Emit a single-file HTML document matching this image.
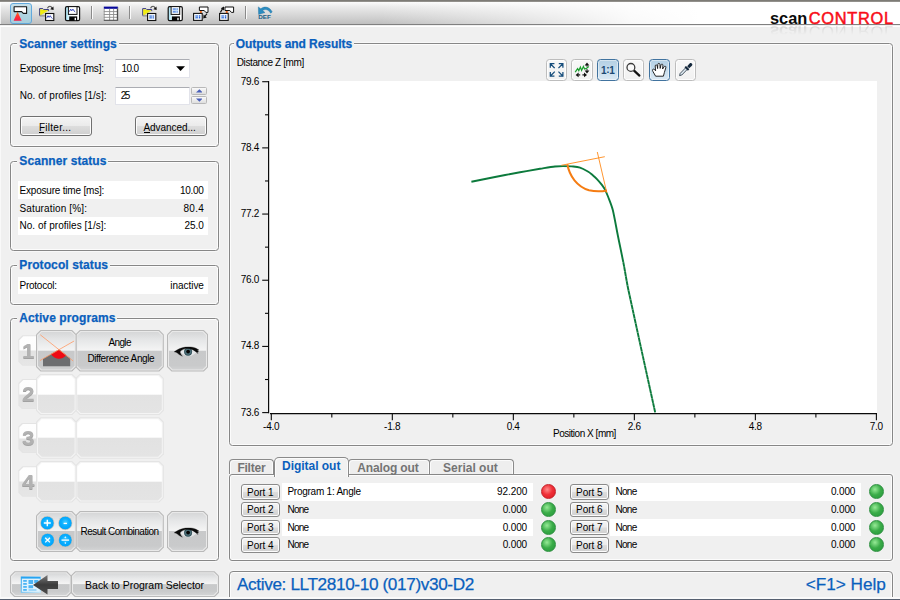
<!DOCTYPE html>
<html><head><meta charset="utf-8"><title>scanCONTROL</title>
<style>
html,body{margin:0;padding:0}
body{width:900px;height:600px;overflow:hidden;background:#f0f0f0;position:relative;font-family:"Liberation Sans",sans-serif;}
div,span,svg{position:absolute;box-sizing:border-box}
.t{white-space:pre;display:block}
.gb{border:1px solid #878787;border-radius:3.5px;box-shadow:inset 0 0 0 1px #fcfcfc,0 0 0 1px #f8f8f8}
.gt{background:#f0f0f0;height:14px}
.row{background:#fff}
.btn{border:1px solid #707070;border-radius:3px;background:linear-gradient(#f4f4f4 0%,#ebebeb 48%,#dddddd 52%,#cfcfcf 100%);box-shadow:inset 0 0 0 1px #fcfcfc}
.inp{background:#fff;border:1px solid #e2e3ea;border-top-color:#abadb3;border-radius:1px}
</style></head><body><div id="app" style="left:0;top:0;width:900px;height:600px;overflow:hidden;background:#f0f0f0">
<div style="left:0;top:0;width:900px;height:24px;background:linear-gradient(#fcfcfc 2px,#ededed 6px,#dedede 12px,#cdcdcd 19px,#bfbfbf 24px)"></div>
<div style="left:380px;top:2px;width:520px;height:21.6px;background:linear-gradient(90deg,rgba(255,255,255,0) 0,rgba(255,255,255,.5) 140px,rgba(255,255,255,.9) 250px,#fff 320px)"></div>
<div style="left:0;top:23.6px;width:900px;height:1.9px;background:#808080"></div>
<div style="left:0;top:0;width:900px;height:2px;background:linear-gradient(#7d7b76 0,#7d7b76 1.2px,#b5b3af 2px)"></div>
<div style="left:0;top:25.5px;width:900px;height:1.7px;background:#fff"></div>
<div style="left:10px;top:3px;width:22px;height:21px;border:1px solid #62a9dc;border-radius:3px;background:linear-gradient(#c6e0ea,#b1d4e0 55%,#a6cedc)"></div><div style="left:91px;top:6px;width:1px;height:13px;background:#8a8a8a"></div><div style="left:92px;top:6px;width:1px;height:13px;background:#fafafa"></div><div style="left:129px;top:6px;width:1px;height:13px;background:#8a8a8a"></div><div style="left:130px;top:6px;width:1px;height:13px;background:#fafafa"></div><div style="left:245px;top:6px;width:1px;height:13px;background:#8a8a8a"></div><div style="left:246px;top:6px;width:1px;height:13px;background:#fafafa"></div><div class="gb" style="left:10px;top:43px;width:209px;height:104px"></div><div class="gt" style="left:17.3px;top:37px;width:101.4px"></div><span class="t" style="left:19.30px;top:38.00px;font-size:12px;line-height:12px;color:#0a5fbd;font-weight:bold;letter-spacing:0.046px;-webkit-text-stroke:0.25px #0a5fbd;">Scanner settings</span><div class="gb" style="left:10px;top:161px;width:209px;height:90px"></div><div class="gt" style="left:17.3px;top:155px;width:91.1px"></div><span class="t" style="left:19.30px;top:155.00px;font-size:12px;line-height:12px;color:#0a5fbd;font-weight:bold;letter-spacing:0.081px;-webkit-text-stroke:0.25px #0a5fbd;">Scanner status</span><div class="gb" style="left:10px;top:265px;width:209px;height:39.5px"></div><div class="gt" style="left:17.3px;top:259px;width:92.7px"></div><span class="t" style="left:19.30px;top:259.00px;font-size:12px;line-height:12px;color:#0a5fbd;font-weight:bold;letter-spacing:0.096px;-webkit-text-stroke:0.25px #0a5fbd;">Protocol status</span><div class="gb" style="left:10px;top:317.5px;width:209px;height:243.5px"></div><div class="gt" style="left:17.3px;top:311.5px;width:100.1px"></div><span class="t" style="left:19.30px;top:312.00px;font-size:12px;line-height:12px;color:#0a5fbd;font-weight:bold;letter-spacing:0.100px;-webkit-text-stroke:0.25px #0a5fbd;">Active programs</span><div class="gb" style="left:229px;top:43px;width:664px;height:403px"></div><div class="gt" style="left:233.7px;top:37px;width:120.5px"></div><span class="t" style="left:235.70px;top:38.00px;font-size:12px;line-height:12px;color:#0a5fbd;font-weight:bold;letter-spacing:-0.047px;-webkit-text-stroke:0.25px #0a5fbd;">Outputs and Results</span><span class="t" style="left:19.70px;top:64.00px;font-size:10px;line-height:10px;color:#000;letter-spacing:-0.226px;">Exposure time [ms]:</span><span class="t" style="left:19.70px;top:91.00px;font-size:10px;line-height:10px;color:#000;letter-spacing:0.031px;">No. of profiles [1/s]:</span><div class="inp" style="left:115px;top:59px;width:75px;height:19px"></div><span class="t" style="left:121.60px;top:64.00px;font-size:10px;line-height:10px;color:#000;letter-spacing:-0.690px;">10.0</span><svg style="left:175.8px;top:66px" width="9.2" height="5.2"><path d="M0.1 0.2H9.1L4.6 5Z" fill="#000"/></svg><div class="inp" style="left:115px;top:87px;width:75px;height:18px"></div><span class="t" style="left:120.70px;top:91.00px;font-size:10px;line-height:10px;color:#000;letter-spacing:-1.525px;">25</span><div style="left:191px;top:87px;width:16px;height:8px;border:1px solid #b8b8b8;border-radius:1.5px;background:linear-gradient(#fafafa,#dedede)"></div><div style="left:191px;top:95.8px;width:16px;height:8.2px;border:1px solid #b8b8b8;border-radius:1.5px;background:linear-gradient(#fafafa,#dedede)"></div><svg style="left:195.6px;top:88.8px" width="6.8" height="4"><path d="M0 3.6L3.4 0.2L6.8 3.6Z" fill="#4a60b8"/></svg><svg style="left:195.6px;top:97.8px" width="6.8" height="4"><path d="M0 0.4L3.4 3.8L6.8 0.4Z" fill="#4a60b8"/></svg><div class="btn" style="left:20px;top:116px;width:72px;height:20px"></div><span class="t" style="left:39.00px;top:123.00px;font-size:10px;line-height:10px;color:#000;letter-spacing:0.248px;">Filter...</span><div style="left:39px;top:132px;width:5px;height:1px;background:#000"></div><div class="btn" style="left:135px;top:116px;width:72px;height:20px"></div><span class="t" style="left:143.50px;top:123.00px;font-size:10px;line-height:10px;color:#000;letter-spacing:-0.061px;">Advanced...</span><div style="left:143.5px;top:132px;width:6.5px;height:1px;background:#000"></div><div class="row" style="left:18px;top:181px;width:189.5px;height:17.7px"></div><div class="row" style="left:18px;top:216.6px;width:189.5px;height:18px"></div><span class="t" style="left:19.50px;top:186.00px;font-size:10px;line-height:10px;color:#000;letter-spacing:-0.198px;">Exposure time [ms]:</span><span class="t" style="left:180.00px;top:186.00px;font-size:10px;line-height:10px;color:#000;letter-spacing:-0.283px;">10.00</span><span class="t" style="left:19.50px;top:204.00px;font-size:10px;line-height:10px;color:#000;letter-spacing:0.136px;">Saturation [%]:</span><span class="t" style="left:183.50px;top:204.00px;font-size:10px;line-height:10px;color:#000;letter-spacing:0.310px;">80.4</span><span class="t" style="left:19.50px;top:221.00px;font-size:10px;line-height:10px;color:#000;letter-spacing:0.035px;">No. of profiles [1/s]:</span><span class="t" style="left:184.40px;top:221.00px;font-size:10px;line-height:10px;color:#000;letter-spacing:0.010px;">25.0</span><div class="row" style="left:18px;top:276.8px;width:189.5px;height:17.7px"></div><span class="t" style="left:19.50px;top:281.00px;font-size:10px;line-height:10px;color:#000;letter-spacing:-0.246px;">Protocol:</span><span class="t" style="left:170.30px;top:281.00px;font-size:10px;line-height:10px;color:#000;letter-spacing:-0.044px;">inactive</span><div style="left:18.3px;top:335.3px;width:20px;height:30.4px;background:#e4e4e4;clip-path:polygon(4px 0,100% 0,100% 100%,4px 100%,0 calc(100% - 4px),0 4px)"></div><div style="left:19.3px;top:336.3px;width:19px;height:28.4px;background:linear-gradient(#fefefe 0,#fdfdfd 14.2px,#e2e2e2 14.8px,#e6e6e6 100%);clip-path:polygon(4px 0,100% 0,100% 100%,4px 100%,0 calc(100% - 4px),0 4px)"></div><span class="t" style="left:21.80px;top:341.00px;font-size:20px;line-height:20px;color:#b2b2b2;font-weight:bold;text-shadow:0 1px 0 #a2a2a2;transform:scaleX(1.12);transform-origin:0 0;">1</span><div style="left:75.3px;top:330px;width:88.5px;height:41.5px;background:#b9b9b9;clip-path:polygon(4.5px 0,84px 0,100% 4.5px,100% 37px,84px 100%,4.5px 100%,0 37px,0 4.5px)"></div><div style="left:76.3px;top:331px;width:86.5px;height:39.5px;background:#e9e9e9;clip-path:polygon(4.1px 0,82.4px 0,100% 4.1px,100% 35.4px,82.4px 100%,4.1px 100%,0 35.4px,0 4.1px)"></div><div style="left:77.3px;top:332px;width:84.5px;height:37.5px;background:linear-gradient(#d6d7d8 0px,#e6e7e8 8.415px,#f4f4f4 18.2px,#c8c9ca 19.2px,#c9cacb 33.5px,#d2d3d4 100%);clip-path:polygon(3.7px 0,80.8px 0,100% 3.7px,100% 33.8px,80.8px 100%,3.7px 100%,0 33.8px,0 3.7px)"></div><div style="left:36px;top:330px;width:40.6px;height:41.5px;background:#b9b9b9;clip-path:polygon(4.5px 0,36.1px 0,100% 4.5px,100% 37px,36.1px 100%,4.5px 100%,0 37px,0 4.5px)"></div><div style="left:37px;top:331px;width:38.6px;height:39.5px;background:#e9e9e9;clip-path:polygon(4.1px 0,34.5px 0,100% 4.1px,100% 35.4px,34.5px 100%,4.1px 100%,0 35.4px,0 4.1px)"></div><div style="left:38px;top:332px;width:36.6px;height:37.5px;background:linear-gradient(#d6d7d8 0px,#e6e7e8 8.415px,#f4f4f4 18.2px,#c8c9ca 19.2px,#c9cacb 33.5px,#d2d3d4 100%);clip-path:polygon(3.7px 0,32.9px 0,100% 3.7px,100% 33.8px,32.9px 100%,3.7px 100%,0 33.8px,0 3.7px)"></div><div style="left:18.3px;top:379px;width:20px;height:30.4px;background:#e4e4e4;clip-path:polygon(4px 0,100% 0,100% 100%,4px 100%,0 calc(100% - 4px),0 4px)"></div><div style="left:19.3px;top:380px;width:19px;height:28.4px;background:linear-gradient(#fefefe 0,#fdfdfd 14.2px,#e2e2e2 14.8px,#e6e6e6 100%);clip-path:polygon(4px 0,100% 0,100% 100%,4px 100%,0 calc(100% - 4px),0 4px)"></div><span class="t" style="left:21.80px;top:384.00px;font-size:20px;line-height:20px;color:#b2b2b2;font-weight:bold;text-shadow:0 1px 0 #a2a2a2;transform:scaleX(1.12);transform-origin:0 0;">2</span><div style="left:75.3px;top:373.7px;width:88.5px;height:41.5px;background:#e4e4e4;clip-path:polygon(4.5px 0,84px 0,100% 4.5px,100% 37px,84px 100%,4.5px 100%,0 37px,0 4.5px)"></div><div style="left:76.3px;top:374.7px;width:86.5px;height:39.5px;background:#f4f4f4;clip-path:polygon(4.1px 0,82.4px 0,100% 4.1px,100% 35.4px,82.4px 100%,4.1px 100%,0 35.4px,0 4.1px)"></div><div style="left:77.3px;top:375.7px;width:84.5px;height:37.5px;background:linear-gradient(#ffffff 0px,#ffffff 18.2px,#e2e2e2 19.2px,#e4e4e4 100%);clip-path:polygon(3.7px 0,80.8px 0,100% 3.7px,100% 33.8px,80.8px 100%,3.7px 100%,0 33.8px,0 3.7px)"></div><div style="left:36px;top:373.7px;width:40.6px;height:41.5px;background:#e4e4e4;clip-path:polygon(4.5px 0,36.1px 0,100% 4.5px,100% 37px,36.1px 100%,4.5px 100%,0 37px,0 4.5px)"></div><div style="left:37px;top:374.7px;width:38.6px;height:39.5px;background:#f4f4f4;clip-path:polygon(4.1px 0,34.5px 0,100% 4.1px,100% 35.4px,34.5px 100%,4.1px 100%,0 35.4px,0 4.1px)"></div><div style="left:38px;top:375.7px;width:36.6px;height:37.5px;background:linear-gradient(#ffffff 0px,#ffffff 18.2px,#e2e2e2 19.2px,#e4e4e4 100%);clip-path:polygon(3.7px 0,32.9px 0,100% 3.7px,100% 33.8px,32.9px 100%,3.7px 100%,0 33.8px,0 3.7px)"></div><div style="left:18.3px;top:422.6px;width:20px;height:30.4px;background:#e4e4e4;clip-path:polygon(4px 0,100% 0,100% 100%,4px 100%,0 calc(100% - 4px),0 4px)"></div><div style="left:19.3px;top:423.6px;width:19px;height:28.4px;background:linear-gradient(#fefefe 0,#fdfdfd 14.2px,#e2e2e2 14.8px,#e6e6e6 100%);clip-path:polygon(4px 0,100% 0,100% 100%,4px 100%,0 calc(100% - 4px),0 4px)"></div><span class="t" style="left:21.80px;top:428.00px;font-size:20px;line-height:20px;color:#b2b2b2;font-weight:bold;text-shadow:0 1px 0 #a2a2a2;transform:scaleX(1.12);transform-origin:0 0;">3</span><div style="left:75.3px;top:417.3px;width:88.5px;height:41.5px;background:#e4e4e4;clip-path:polygon(4.5px 0,84px 0,100% 4.5px,100% 37px,84px 100%,4.5px 100%,0 37px,0 4.5px)"></div><div style="left:76.3px;top:418.3px;width:86.5px;height:39.5px;background:#f4f4f4;clip-path:polygon(4.1px 0,82.4px 0,100% 4.1px,100% 35.4px,82.4px 100%,4.1px 100%,0 35.4px,0 4.1px)"></div><div style="left:77.3px;top:419.3px;width:84.5px;height:37.5px;background:linear-gradient(#ffffff 0px,#ffffff 18.2px,#e2e2e2 19.2px,#e4e4e4 100%);clip-path:polygon(3.7px 0,80.8px 0,100% 3.7px,100% 33.8px,80.8px 100%,3.7px 100%,0 33.8px,0 3.7px)"></div><div style="left:36px;top:417.3px;width:40.6px;height:41.5px;background:#e4e4e4;clip-path:polygon(4.5px 0,36.1px 0,100% 4.5px,100% 37px,36.1px 100%,4.5px 100%,0 37px,0 4.5px)"></div><div style="left:37px;top:418.3px;width:38.6px;height:39.5px;background:#f4f4f4;clip-path:polygon(4.1px 0,34.5px 0,100% 4.1px,100% 35.4px,34.5px 100%,4.1px 100%,0 35.4px,0 4.1px)"></div><div style="left:38px;top:419.3px;width:36.6px;height:37.5px;background:linear-gradient(#ffffff 0px,#ffffff 18.2px,#e2e2e2 19.2px,#e4e4e4 100%);clip-path:polygon(3.7px 0,32.9px 0,100% 3.7px,100% 33.8px,32.9px 100%,3.7px 100%,0 33.8px,0 3.7px)"></div><div style="left:18.3px;top:466.3px;width:20px;height:30.4px;background:#e4e4e4;clip-path:polygon(4px 0,100% 0,100% 100%,4px 100%,0 calc(100% - 4px),0 4px)"></div><div style="left:19.3px;top:467.3px;width:19px;height:28.4px;background:linear-gradient(#fefefe 0,#fdfdfd 14.2px,#e2e2e2 14.8px,#e6e6e6 100%);clip-path:polygon(4px 0,100% 0,100% 100%,4px 100%,0 calc(100% - 4px),0 4px)"></div><span class="t" style="left:21.80px;top:472.00px;font-size:20px;line-height:20px;color:#b2b2b2;font-weight:bold;text-shadow:0 1px 0 #a2a2a2;transform:scaleX(1.12);transform-origin:0 0;">4</span><div style="left:75.3px;top:461px;width:88.5px;height:41.5px;background:#e4e4e4;clip-path:polygon(4.5px 0,84px 0,100% 4.5px,100% 37px,84px 100%,4.5px 100%,0 37px,0 4.5px)"></div><div style="left:76.3px;top:462px;width:86.5px;height:39.5px;background:#f4f4f4;clip-path:polygon(4.1px 0,82.4px 0,100% 4.1px,100% 35.4px,82.4px 100%,4.1px 100%,0 35.4px,0 4.1px)"></div><div style="left:77.3px;top:463px;width:84.5px;height:37.5px;background:linear-gradient(#ffffff 0px,#ffffff 18.2px,#e2e2e2 19.2px,#e4e4e4 100%);clip-path:polygon(3.7px 0,80.8px 0,100% 3.7px,100% 33.8px,80.8px 100%,3.7px 100%,0 33.8px,0 3.7px)"></div><div style="left:36px;top:461px;width:40.6px;height:41.5px;background:#e4e4e4;clip-path:polygon(4.5px 0,36.1px 0,100% 4.5px,100% 37px,36.1px 100%,4.5px 100%,0 37px,0 4.5px)"></div><div style="left:37px;top:462px;width:38.6px;height:39.5px;background:#f4f4f4;clip-path:polygon(4.1px 0,34.5px 0,100% 4.1px,100% 35.4px,34.5px 100%,4.1px 100%,0 35.4px,0 4.1px)"></div><div style="left:38px;top:463px;width:36.6px;height:37.5px;background:linear-gradient(#ffffff 0px,#ffffff 18.2px,#e2e2e2 19.2px,#e4e4e4 100%);clip-path:polygon(3.7px 0,32.9px 0,100% 3.7px,100% 33.8px,32.9px 100%,3.7px 100%,0 33.8px,0 3.7px)"></div><div style="left:167px;top:330px;width:41.3px;height:41.5px;background:#b9b9b9;clip-path:polygon(4.5px 0,36.8px 0,100% 4.5px,100% 37px,36.8px 100%,4.5px 100%,0 37px,0 4.5px)"></div><div style="left:168px;top:331px;width:39.3px;height:39.5px;background:#e9e9e9;clip-path:polygon(4.1px 0,35.2px 0,100% 4.1px,100% 35.4px,35.2px 100%,4.1px 100%,0 35.4px,0 4.1px)"></div><div style="left:169px;top:332px;width:37.3px;height:37.5px;background:linear-gradient(#d6d7d8 0px,#e6e7e8 8.415px,#f4f4f4 18.2px,#c8c9ca 19.2px,#c9cacb 33.5px,#d2d3d4 100%);clip-path:polygon(3.7px 0,33.6px 0,100% 3.7px,100% 33.8px,33.6px 100%,3.7px 100%,0 33.8px,0 3.7px)"></div><svg style="left:36px;top:330px" width="42" height="42" viewBox="36 330 42 42">
<polygon points="43,366.3 43,358.7 59,349.5 70.2,358.3 70.2,366.3" fill="#6d6e70"/>
<path d="M59 349.5L51 354.1A9.2 9.2 0 0 0 66.2 355.2Z" fill="#ee0a14"/>
<line x1="40.3" y1="334.8" x2="73.2" y2="361" stroke="#ff9a66" stroke-width="0.8"/>
<line x1="74.1" y1="341" x2="39.9" y2="360.6" stroke="#ff9a66" stroke-width="0.8"/>
</svg><span class="t" style="left:108.50px;top:338.00px;font-size:10px;line-height:10px;color:#000;letter-spacing:-0.645px;">Angle</span><span class="t" style="left:87.40px;top:354.00px;font-size:10px;line-height:10px;color:#000;letter-spacing:-0.400px;">Difference Angle</span><svg style="left:170px;top:342px" width="34" height="20" viewBox="170 342 34 20">
<path d="M180 352C182 349.4 186 348.3 189 348.3C192 348.5 195 350 196.8 352C195 354.4 192 355.9 189 355.9C186 355.9 182.5 355 180 352Z" fill="#e4e6e8"/>
<circle cx="188.1" cy="351.7" r="3.9" fill="#4f737d"/>
<circle cx="188.1" cy="351.7" r="3.6" fill="none" stroke="#2f4a52" stroke-width="0.8"/>
<circle cx="188.1" cy="351.6" r="1.9" fill="#050505"/>
<path d="M174.2 351.8C177 349.8 181 347.6 185.2 347.1C189 346.6 193.5 347 196 348.2L198.9 350L197.4 350.6L198.6 352L197 352L198 353.6C196 351.6 194 350.2 192 349.4C189 348.2 185 348.3 182 350C180.6 350.8 180 351.6 180 352C180.4 353.6 181.2 355 182.4 356.2C180 355.4 178 353.6 176.6 352.6C175.8 352.2 175 352 174.2 351.8Z" fill="#0a0a0a" stroke="#0a0a0a" stroke-width="0.3"/>
</svg><div style="left:75.3px;top:511px;width:88.5px;height:41px;background:#b9b9b9;clip-path:polygon(4.5px 0,84px 0,100% 4.5px,100% 36.5px,84px 100%,4.5px 100%,0 36.5px,0 4.5px)"></div><div style="left:76.3px;top:512px;width:86.5px;height:39px;background:#e9e9e9;clip-path:polygon(4.1px 0,82.4px 0,100% 4.1px,100% 34.9px,82.4px 100%,4.1px 100%,0 34.9px,0 4.1px)"></div><div style="left:77.3px;top:513px;width:84.5px;height:37px;background:linear-gradient(#d6d7d8 0px,#e6e7e8 8.1px,#f4f4f4 17.5px,#c8c9ca 18.5px,#c9cacb 33px,#d2d3d4 100%);clip-path:polygon(3.7px 0,80.8px 0,100% 3.7px,100% 33.3px,80.8px 100%,3.7px 100%,0 33.3px,0 3.7px)"></div><div style="left:36px;top:511px;width:40.6px;height:41px;background:#b9b9b9;clip-path:polygon(4.5px 0,36.1px 0,100% 4.5px,100% 36.5px,36.1px 100%,4.5px 100%,0 36.5px,0 4.5px)"></div><div style="left:37px;top:512px;width:38.6px;height:39px;background:#e9e9e9;clip-path:polygon(4.1px 0,34.5px 0,100% 4.1px,100% 34.9px,34.5px 100%,4.1px 100%,0 34.9px,0 4.1px)"></div><div style="left:38px;top:513px;width:36.6px;height:37px;background:linear-gradient(#d6d7d8 0px,#e6e7e8 8.1px,#f4f4f4 17.5px,#c8c9ca 18.5px,#c9cacb 33px,#d2d3d4 100%);clip-path:polygon(3.7px 0,32.9px 0,100% 3.7px,100% 33.3px,32.9px 100%,3.7px 100%,0 33.3px,0 3.7px)"></div><div style="left:167px;top:511px;width:41.3px;height:41px;background:#b9b9b9;clip-path:polygon(4.5px 0,36.8px 0,100% 4.5px,100% 36.5px,36.8px 100%,4.5px 100%,0 36.5px,0 4.5px)"></div><div style="left:168px;top:512px;width:39.3px;height:39px;background:#e9e9e9;clip-path:polygon(4.1px 0,35.2px 0,100% 4.1px,100% 34.9px,35.2px 100%,4.1px 100%,0 34.9px,0 4.1px)"></div><div style="left:169px;top:513px;width:37.3px;height:37px;background:linear-gradient(#d6d7d8 0px,#e6e7e8 8.1px,#f4f4f4 17.5px,#c8c9ca 18.5px,#c9cacb 33px,#d2d3d4 100%);clip-path:polygon(3.7px 0,33.6px 0,100% 3.7px,100% 33.3px,33.6px 100%,3.7px 100%,0 33.3px,0 3.7px)"></div><svg style="left:170px;top:522.5px" width="34" height="20" viewBox="170 342 34 20">
<path d="M180 352C182 349.4 186 348.3 189 348.3C192 348.5 195 350 196.8 352C195 354.4 192 355.9 189 355.9C186 355.9 182.5 355 180 352Z" fill="#e4e6e8"/>
<circle cx="188.1" cy="351.7" r="3.9" fill="#4f737d"/>
<circle cx="188.1" cy="351.7" r="3.6" fill="none" stroke="#2f4a52" stroke-width="0.8"/>
<circle cx="188.1" cy="351.6" r="1.9" fill="#050505"/>
<path d="M174.2 351.8C177 349.8 181 347.6 185.2 347.1C189 346.6 193.5 347 196 348.2L198.9 350L197.4 350.6L198.6 352L197 352L198 353.6C196 351.6 194 350.2 192 349.4C189 348.2 185 348.3 182 350C180.6 350.8 180 351.6 180 352C180.4 353.6 181.2 355 182.4 356.2C180 355.4 178 353.6 176.6 352.6C175.8 352.2 175 352 174.2 351.8Z" fill="#0a0a0a" stroke="#0a0a0a" stroke-width="0.3"/>
</svg><svg style="left:36px;top:511px" width="42" height="42" viewBox="36 511 42 42">
<defs><radialGradient id="bg" cx="50%" cy="45%" r="55%"><stop offset="0" stop-color="#48ccff"/><stop offset="0.5" stop-color="#0aaeff"/><stop offset="1" stop-color="#00a0f8"/></radialGradient></defs>
<g stroke="#f3c9a8" stroke-width="0.6" fill="url(#bg)">
<circle cx="47.3" cy="523" r="6.8"/><circle cx="65.3" cy="523" r="6.8"/><circle cx="47.6" cy="540.1" r="6.8"/><circle cx="65.3" cy="540.1" r="6.8"/></g>
<g stroke="#fff" stroke-width="1.3" fill="#fff">
<path d="M43.8 523H50.8M47.3 519.8V526.2"/>
<path d="M63.6 523.4H67"/>
<path d="M45.2 537.8L50 542.4M50 537.8L45.2 542.4" stroke-width="1.2"/>
<path d="M61.5 540.1H69.1"/>
<circle cx="65.3" cy="537.3" r="0.5" stroke-width="0.6"/><circle cx="65.3" cy="542.9" r="0.5" stroke-width="0.6"/>
</g></svg><span class="t" style="left:80.50px;top:527.00px;font-size:10px;line-height:10px;color:#000;letter-spacing:-0.516px;">Result Combination</span><div style="left:70.6px;top:571.2px;width:148.4px;height:26px;background:#b9b9b9;clip-path:polygon(4.5px 0,143.9px 0,100% 4.5px,100% 21.5px,143.9px 100%,4.5px 100%,0 21.5px,0 4.5px)"></div><div style="left:71.6px;top:572.2px;width:146.4px;height:24px;background:#e9e9e9;clip-path:polygon(4.1px 0,142.3px 0,100% 4.1px,100% 19.9px,142.3px 100%,4.1px 100%,0 19.9px,0 4.1px)"></div><div style="left:72.6px;top:573.2px;width:144.4px;height:22px;background:linear-gradient(#d6d7d8 0px,#e6e7e8 4.995px,#f4f4f4 10.6px,#c8c9ca 11.6px,#c9cacb 18px,#d2d3d4 100%);clip-path:polygon(3.7px 0,140.7px 0,100% 3.7px,100% 18.3px,140.7px 100%,3.7px 100%,0 18.3px,0 3.7px)"></div><div style="left:10px;top:571.2px;width:61.6px;height:26px;background:#b9b9b9;clip-path:polygon(4.5px 0,57.1px 0,100% 4.5px,100% 21.5px,57.1px 100%,4.5px 100%,0 21.5px,0 4.5px)"></div><div style="left:11px;top:572.2px;width:59.6px;height:24px;background:#e9e9e9;clip-path:polygon(4.1px 0,55.5px 0,100% 4.1px,100% 19.9px,55.5px 100%,4.1px 100%,0 19.9px,0 4.1px)"></div><div style="left:12px;top:573.2px;width:57.6px;height:22px;background:linear-gradient(#d6d7d8 0px,#e6e7e8 4.995px,#f4f4f4 10.6px,#c8c9ca 11.6px,#c9cacb 18px,#d2d3d4 100%);clip-path:polygon(3.7px 0,53.9px 0,100% 3.7px,100% 18.3px,53.9px 100%,3.7px 100%,0 18.3px,0 3.7px)"></div><svg style="left:18px;top:572px" width="44" height="26" viewBox="18 572 44 26">
<defs><linearGradient id="ar" x1="0" y1="0" x2="0" y2="1"><stop offset="0" stop-color="#7a7a7a"/><stop offset="0.5" stop-color="#3c3c3c"/><stop offset="1" stop-color="#4d4d4d"/></linearGradient>
<linearGradient id="gr" x1="0" y1="0" x2="1" y2="1"><stop offset="0" stop-color="#1ea0f0"/><stop offset="1" stop-color="#bfe6fb"/></linearGradient></defs>
<rect x="21.3" y="577" width="19" height="15.3" fill="#dff2fd" stroke="url(#gr)" stroke-width="1"/>
<rect x="21.3" y="577" width="19" height="1.6" fill="#26a4f2"/>
<g fill="#4cb4f4"><rect x="23.2" y="580" width="3.6" height="1.8"/><rect x="23.2" y="583" width="3.6" height="1.8"/><rect x="23.2" y="586" width="3.6" height="1.8"/><rect x="23.2" y="589" width="3.6" height="1.8"/>
<rect x="28.5" y="580" width="4.6" height="4"/><rect x="28.5" y="585.2" width="4.6" height="3"/><rect x="34.2" y="580" width="4.2" height="3"/><rect x="28.5" y="589.2" width="8" height="1.6" fill="#8fd0f8"/></g>
<path d="M33 585L47.5 575V581H58V589H47.5V594.6Z" fill="url(#ar)"/>
</svg><span class="t" style="left:85.10px;top:580.00px;font-size:10.5px;line-height:10.5px;color:#000;letter-spacing:-0.028px;">Back to Program Selector</span><span class="t" style="left:236.70px;top:58.00px;font-size:10px;line-height:10px;color:#000;letter-spacing:-0.371px;">Distance Z [mm]</span><div style="left:545.6px;top:59px;width:21.4px;height:21.6px;border:1px solid #bdbdbd;border-radius:3.5px;background:linear-gradient(#f8f8f8,#f1f1f1);box-shadow:inset 0 0 0 1px #fdfdfd"></div><div style="left:571.3px;top:59px;width:21.4px;height:21.6px;border:1px solid #bdbdbd;border-radius:3.5px;background:linear-gradient(#f8f8f8,#f1f1f1);box-shadow:inset 0 0 0 1px #fdfdfd"></div><div style="left:597.3px;top:59px;width:21.4px;height:21.6px;border:1px solid #41739f;border-radius:3.5px;background:linear-gradient(#b3cfe3,#c6dcec 50%,#dbe9f4);box-shadow:inset 0 0 0 1px rgba(255,255,255,.45)"></div><div style="left:623px;top:59px;width:21.4px;height:21.6px;border:1px solid #bdbdbd;border-radius:3.5px;background:linear-gradient(#f8f8f8,#f1f1f1);box-shadow:inset 0 0 0 1px #fdfdfd"></div><div style="left:648.8px;top:59px;width:21.4px;height:21.6px;border:1px solid #41739f;border-radius:3.5px;background:linear-gradient(#b3cfe3,#c6dcec 50%,#dbe9f4);box-shadow:inset 0 0 0 1px rgba(255,255,255,.45)"></div><div style="left:674.6px;top:59px;width:21.4px;height:21.6px;border:1px solid #bdbdbd;border-radius:3.5px;background:linear-gradient(#f8f8f8,#f1f1f1);box-shadow:inset 0 0 0 1px #fdfdfd"></div><div style="left:269px;top:80.6px;width:607.6px;height:332.6px;background:#fff"></div><svg style="left:229px;top:43px" width="664" height="403" viewBox="229 43 664 403"><g stroke="#0a0a0a" stroke-width="1.2" fill="none"><path d="M268.6 81.1V413.2M270 413.6H877"/></g><g stroke="#0a0a0a" stroke-width="1.1" fill="none"><path d="M271.30 413.6V420.20"/><path d="M331.81 413.6V417.40"/><path d="M392.32 413.6V420.20"/><path d="M452.83 413.6V417.40"/><path d="M513.34 413.6V420.20"/><path d="M573.85 413.6V417.40"/><path d="M634.36 413.6V420.20"/><path d="M694.87 413.6V417.40"/><path d="M755.38 413.6V420.20"/><path d="M815.89 413.6V417.40"/><path d="M876.40 413.6V420.20"/><path d="M268.6 81.70H262.20"/><path d="M268.6 114.79H265.00"/><path d="M268.6 147.88H262.20"/><path d="M268.6 180.97H265.00"/><path d="M268.6 214.06H262.20"/><path d="M268.6 247.15H265.00"/><path d="M268.6 280.24H262.20"/><path d="M268.6 313.33H265.00"/><path d="M268.6 346.42H262.20"/><path d="M268.6 379.51H265.00"/><path d="M268.6 412.60H262.20"/></g><path d="M471.4 181.7C475.3 180.9 487.1 178.5 495.0 177.0C503.1 175.4 512.5 173.7 520.0 172.3C526.7 171.1 534.2 169.8 540.0 168.8C545.0 168.0 551.2 166.9 555.0 166.5C557.7 166.2 560.3 166.1 563.0 166.1C565.8 166.1 568.9 166.1 571.7 166.4C574.5 166.7 577.3 166.8 580.0 167.7C582.8 168.6 586.2 170.6 588.3 171.8C589.8 172.7 591.1 173.9 592.5 175.0C593.9 176.2 595.4 177.4 596.7 178.8C598.2 180.4 600.3 182.8 601.7 184.6C602.9 186.2 604.1 187.8 605.0 189.6C606.1 191.7 607.2 194.5 608.2 197.0C609.5 200.4 611.7 205.5 612.8 210.0C614.4 216.6 616.3 227.8 618.1 236.7C619.9 245.6 621.8 254.5 623.5 263.3C625.2 272.0 626.5 280.8 628.3 289.5C633.6 314.4 650.7 392.0 655.2 412.5" fill="none" stroke="#0c7a3c" stroke-width="1.9" stroke-linejoin="round"/><path d="M622.5 262L655.2 412.5" fill="none" stroke="#fff" stroke-width="2.2" stroke-dasharray="0.5 4.3" opacity=".55"/><g stroke="#ff8a1a" fill="none"><path d="M561.3 165.3L604.8 156.7M597.3 152L606.8 192.8" stroke-width="0.9"/><path d="M567.3 164.2C569.5 176 577 186.6 589 190.2C595 191.6 601 191.6 607 190.4" stroke-width="2" stroke="#f57c12"/></g></svg><span class="t" style="left:240.80px;top:77.00px;font-size:10px;line-height:10px;color:#000;letter-spacing:-0.290px;">79.6</span><span class="t" style="left:240.80px;top:143.00px;font-size:10px;line-height:10px;color:#000;letter-spacing:-0.290px;">78.4</span><span class="t" style="left:240.80px;top:209.00px;font-size:10px;line-height:10px;color:#000;letter-spacing:-0.290px;">77.2</span><span class="t" style="left:240.80px;top:275.00px;font-size:10px;line-height:10px;color:#000;letter-spacing:-0.290px;">76.0</span><span class="t" style="left:240.80px;top:341.00px;font-size:10px;line-height:10px;color:#000;letter-spacing:-0.290px;">74.8</span><span class="t" style="left:240.80px;top:408.00px;font-size:10px;line-height:10px;color:#000;letter-spacing:-0.290px;">73.6</span><span class="t" style="left:263.10px;top:422.00px;font-size:10px;line-height:10px;color:#000;letter-spacing:-0.278px;">-4.0</span><span class="t" style="left:384.12px;top:422.00px;font-size:10px;line-height:10px;color:#000;letter-spacing:-0.278px;">-1.8</span><span class="t" style="left:506.74px;top:422.00px;font-size:10px;line-height:10px;color:#000;letter-spacing:-0.353px;">0.4</span><span class="t" style="left:627.76px;top:422.00px;font-size:10px;line-height:10px;color:#000;letter-spacing:-0.353px;">2.6</span><span class="t" style="left:748.78px;top:422.00px;font-size:10px;line-height:10px;color:#000;letter-spacing:-0.353px;">4.8</span><span class="t" style="left:869.80px;top:422.00px;font-size:10px;line-height:10px;color:#000;letter-spacing:-0.353px;">7.0</span><span class="t" style="left:553.00px;top:429.00px;font-size:10px;line-height:10px;color:#000;letter-spacing:-0.474px;">Position X [mm]</span><div class="gb" style="left:229px;top:474px;width:664px;height:87.2px;border-radius:3px"></div><div style="left:229px;top:459px;width:45px;height:15px;border:1px solid #8a8a8a;border-bottom:none;border-radius:4px 4px 0 0;background:#eeeeee;box-shadow:inset 1px 1px 0 #fbfbfb,inset -1px 0 0 #fbfbfb"></div><span class="t" style="left:237.40px;top:462.00px;font-size:12px;line-height:12px;color:#747474;font-weight:bold;letter-spacing:-0.229px;">Filter</span><div style="left:348px;top:459px;width:81.5px;height:15px;border:1px solid #8a8a8a;border-bottom:none;border-radius:4px 4px 0 0;background:#eeeeee;box-shadow:inset 1px 1px 0 #fbfbfb,inset -1px 0 0 #fbfbfb"></div><span class="t" style="left:357.20px;top:462.00px;font-size:12px;line-height:12px;color:#747474;font-weight:bold;letter-spacing:-0.117px;">Analog out</span><div style="left:428.5px;top:459px;width:85px;height:15px;border:1px solid #8a8a8a;border-bottom:none;border-radius:4px 4px 0 0;background:#eeeeee;box-shadow:inset 1px 1px 0 #fbfbfb,inset -1px 0 0 #fbfbfb"></div><span class="t" style="left:443.00px;top:462.00px;font-size:12px;line-height:12px;color:#747474;font-weight:bold;letter-spacing:0.012px;">Serial out</span><div style="left:274px;top:456.6px;width:75px;height:20px;border:1px solid #8a8a8a;border-bottom:none;border-radius:5px 5px 0 0;background:#f1f1f1;box-shadow:inset 1px 1px 0 #fbfbfb,inset -1px 0 0 #fbfbfb"></div><span class="t" style="left:282.00px;top:460.00px;font-size:12px;line-height:12px;color:#0a5fbd;font-weight:bold;letter-spacing:-0.027px;">Digital out</span><div class="row" style="left:281.5px;top:483.2px;width:251.5px;height:17.8px"></div><div class="btn" style="left:241px;top:484px;width:38.6px;height:15.6px;border-color:#8a8a8a"></div><span class="t" style="left:247.00px;top:488.00px;font-size:10px;line-height:10px;color:#000;letter-spacing:-0.017px;">Port 1</span><span class="t" style="left:287.40px;top:487.00px;font-size:10px;line-height:10px;color:#000;letter-spacing:-0.244px;">Program 1: Angle</span><span class="t" style="left:497.00px;top:487.00px;font-size:10px;line-height:10px;color:#000;letter-spacing:-0.079px;">92.200</span><div style="left:540.5px;top:484.2px;width:15px;height:15px;border-radius:50%;background:radial-gradient(circle at 40% 35%,#ff8a8a 0,#f03038 45%,#d81820 100%);border:0.6px solid #c42028"></div><div class="btn" style="left:241px;top:501.8px;width:38.6px;height:15.6px;border-color:#8a8a8a"></div><span class="t" style="left:247.00px;top:505.00px;font-size:10px;line-height:10px;color:#000;letter-spacing:-0.017px;">Port 2</span><span class="t" style="left:287.40px;top:505.00px;font-size:10px;line-height:10px;color:#000;letter-spacing:-0.735px;">None</span><span class="t" style="left:502.70px;top:505.00px;font-size:10px;line-height:10px;color:#000;letter-spacing:-0.133px;">0.000</span><div style="left:540.5px;top:501.95px;width:15px;height:15px;border-radius:50%;background:radial-gradient(circle at 38% 34%,#96ea96 0,#3aac48 48%,#23963a 100%);border:0.6px solid #2e9040"></div><div class="row" style="left:281.5px;top:518.7px;width:251.5px;height:17.5px"></div><div class="btn" style="left:241px;top:519.5px;width:38.6px;height:15.6px;border-color:#8a8a8a"></div><span class="t" style="left:247.00px;top:523.00px;font-size:10px;line-height:10px;color:#000;letter-spacing:-0.017px;">Port 3</span><span class="t" style="left:287.40px;top:523.00px;font-size:10px;line-height:10px;color:#000;letter-spacing:-0.735px;">None</span><span class="t" style="left:502.70px;top:523.00px;font-size:10px;line-height:10px;color:#000;letter-spacing:-0.133px;">0.000</span><div style="left:540.5px;top:519.55px;width:15px;height:15px;border-radius:50%;background:radial-gradient(circle at 38% 34%,#96ea96 0,#3aac48 48%,#23963a 100%);border:0.6px solid #2e9040"></div><div class="btn" style="left:241px;top:537px;width:38.6px;height:15.6px;border-color:#8a8a8a"></div><span class="t" style="left:247.00px;top:541.00px;font-size:10px;line-height:10px;color:#000;letter-spacing:-0.017px;">Port 4</span><span class="t" style="left:287.40px;top:540.00px;font-size:10px;line-height:10px;color:#000;letter-spacing:-0.735px;">None</span><span class="t" style="left:502.70px;top:540.00px;font-size:10px;line-height:10px;color:#000;letter-spacing:-0.133px;">0.000</span><div style="left:540.5px;top:537.2px;width:15px;height:15px;border-radius:50%;background:radial-gradient(circle at 38% 34%,#96ea96 0,#3aac48 48%,#23963a 100%);border:0.6px solid #2e9040"></div><div class="row" style="left:610px;top:483.2px;width:251px;height:17.8px"></div><div class="btn" style="left:570px;top:484px;width:38.6px;height:15.6px;border-color:#8a8a8a"></div><span class="t" style="left:576.00px;top:488.00px;font-size:10px;line-height:10px;color:#000;letter-spacing:-0.017px;">Port 5</span><span class="t" style="left:615.50px;top:487.00px;font-size:10px;line-height:10px;color:#000;letter-spacing:-0.735px;">None</span><span class="t" style="left:830.90px;top:487.00px;font-size:10px;line-height:10px;color:#000;letter-spacing:-0.133px;">0.000</span><div style="left:869.1px;top:484.2px;width:15px;height:15px;border-radius:50%;background:radial-gradient(circle at 38% 34%,#96ea96 0,#3aac48 48%,#23963a 100%);border:0.6px solid #2e9040"></div><div class="btn" style="left:570px;top:501.8px;width:38.6px;height:15.6px;border-color:#8a8a8a"></div><span class="t" style="left:576.00px;top:505.00px;font-size:10px;line-height:10px;color:#000;letter-spacing:-0.017px;">Port 6</span><span class="t" style="left:615.50px;top:505.00px;font-size:10px;line-height:10px;color:#000;letter-spacing:-0.735px;">None</span><span class="t" style="left:830.90px;top:505.00px;font-size:10px;line-height:10px;color:#000;letter-spacing:-0.133px;">0.000</span><div style="left:869.1px;top:501.95px;width:15px;height:15px;border-radius:50%;background:radial-gradient(circle at 38% 34%,#96ea96 0,#3aac48 48%,#23963a 100%);border:0.6px solid #2e9040"></div><div class="row" style="left:610px;top:518.7px;width:251px;height:17.5px"></div><div class="btn" style="left:570px;top:519.5px;width:38.6px;height:15.6px;border-color:#8a8a8a"></div><span class="t" style="left:576.00px;top:523.00px;font-size:10px;line-height:10px;color:#000;letter-spacing:-0.017px;">Port 7</span><span class="t" style="left:615.50px;top:523.00px;font-size:10px;line-height:10px;color:#000;letter-spacing:-0.735px;">None</span><span class="t" style="left:830.90px;top:523.00px;font-size:10px;line-height:10px;color:#000;letter-spacing:-0.133px;">0.000</span><div style="left:869.1px;top:519.55px;width:15px;height:15px;border-radius:50%;background:radial-gradient(circle at 38% 34%,#96ea96 0,#3aac48 48%,#23963a 100%);border:0.6px solid #2e9040"></div><div class="btn" style="left:570px;top:537px;width:38.6px;height:15.6px;border-color:#8a8a8a"></div><span class="t" style="left:576.00px;top:541.00px;font-size:10px;line-height:10px;color:#000;letter-spacing:-0.017px;">Port 8</span><span class="t" style="left:615.50px;top:540.00px;font-size:10px;line-height:10px;color:#000;letter-spacing:-0.735px;">None</span><span class="t" style="left:830.90px;top:540.00px;font-size:10px;line-height:10px;color:#000;letter-spacing:-0.133px;">0.000</span><div style="left:869.1px;top:537.2px;width:15px;height:15px;border-radius:50%;background:radial-gradient(circle at 38% 34%,#96ea96 0,#3aac48 48%,#23963a 100%);border:0.6px solid #2e9040"></div><div class="gb" style="left:229px;top:571.2px;width:664px;height:40px;border-radius:4px"></div><span class="t" style="left:237.00px;top:576.00px;font-size:17.2px;line-height:17.2px;color:#0a5fbd;letter-spacing:-0.372px;-webkit-text-stroke:0.25px #0a5fbd;">Active: LLT2810-10 (017)v30-D2</span><span class="t" style="left:805.70px;top:576.00px;font-size:17.2px;line-height:17.2px;color:#0a5fbd;letter-spacing:-0.021px;-webkit-text-stroke:0.25px #0a5fbd;">&lt;F1&gt; Help</span><span class="t" style="left:770.00px;top:10.00px;font-size:16.4px;line-height:16.4px;color:#0a0a0a;font-weight:bold;letter-spacing:-0.020px;">scan</span><span class="t" style="left:808.80px;top:10.00px;font-size:16.4px;line-height:16.4px;color:#f80d18;letter-spacing:0.677px;-webkit-text-stroke:0.5px #f80d18;">CONTROL</span><div style="left:760px;top:26px;width:140px;height:12px;overflow:hidden;-webkit-mask-image:linear-gradient(rgba(0,0,0,.17),rgba(0,0,0,0) 72%);mask-image:linear-gradient(rgba(0,0,0,.17),rgba(0,0,0,0) 72%)"><div style="left:0;top:0;width:140px;height:12px;transform:scaleY(-1);transform-origin:50% 0"><span class="t" style="left:10.00px;top:-14.00px;font-size:16.4px;line-height:16.4px;color:#555;font-weight:bold;letter-spacing:-0.020px;">scan</span><span class="t" style="left:48.80px;top:-14.00px;font-size:16.4px;line-height:16.4px;color:#555;letter-spacing:0.677px;">CONTROL</span></div></div><svg style="left:0;top:0" width="300" height="26" viewBox="0 0 300 26"><defs><linearGradient id="las" x1="0" y1="0" x2="0" y2="1"><stop offset="0" stop-color="#ff7a10"/><stop offset="0.45" stop-color="#ff3a30"/><stop offset="1" stop-color="#f41848"/></linearGradient></defs><path d="M17.6 11.8L21.7 20.8H13.6Z" fill="url(#las)"/><path d="M14.1 6.8H26.6V13.4H23.3L21.6 11.6H14.1Z" fill="#fff" stroke="#151515" stroke-width="1.1" stroke-linejoin="round"/><path d="M39.6 15.6V8.6h3.2l0.8 0.9h5v1.6" fill="#f4f4f4" stroke="#20207a" stroke-width="0.9"/><path d="M40.1 9.6L48.2 10.6L40.3 15.2Z" fill="#f2ee10" stroke="#c8c400" stroke-width="0.4"/><path d="M39.6 15.9H45.2" stroke="#707070" stroke-width="0.9"/><path d="M47.4 8.2C48.8 5.6 51.2 5.6 51.8 8" fill="none" stroke="#555" stroke-width="1.1"/><path d="M53.4 6.4L53.6 9.9L50.2 9.2Z" fill="#111"/><rect x="45.6" y="13.5" width="8.2" height="7" fill="#fff" stroke="#111" stroke-width="1.1"/><path d="M46.7 18.2l1.3 -2.5l1.1 1.7l1.1 -1.7l1.1 1.8l1.2 1" fill="none" stroke="#2a3cb8" stroke-width="0.9"/><defs><linearGradient id="fl65" x1="0" y1="0" x2="1" y2="0"><stop offset="0" stop-color="#9fe0f4"/><stop offset="0.3" stop-color="#e8f8fc"/><stop offset="0.45" stop-color="#fff"/></linearGradient></defs><rect x="65.5" y="6.6" width="14.1" height="14" rx="1.4" fill="url(#fl65)" stroke="#111" stroke-width="1.2"/><rect x="68.4" y="6.6" width="8.6" height="7.8" fill="#fff" stroke="#111" stroke-width="1"/><path d="M69.4 11.6l1.3 -2.5l1.1 1.7l1.1 -1.7l1.1 1.8l1.2 1" fill="none" stroke="#2a3cb8" stroke-width="0.9"/><rect x="69.2" y="16.4" width="8" height="4.2" fill="#050505"/><rect x="74.6" y="17.8" width="1.4" height="2.4" fill="#fff"/><rect x="104.4" y="7" width="14" height="14" fill="#6e6e6e" opacity=".55"/><rect x="103.8" y="6.6" width="13.8" height="13.6" fill="#fff"/><rect x="103.8" y="6.6" width="14" height="2.2" fill="#06069a"/><g stroke="#8c8c8c" stroke-width="0.9"><path d="M104.2 8.8V20.4M109.6 8.8V20.4M113.6 8.8V20.4M103.8 11.6H117.6M103.8 14.5H117.6M103.8 17.3H117.6"/></g><path d="M117.4 8.8V20.4M103.8 20.3H117.8" stroke="#4a4a4a" stroke-width="1.1"/><path d="M142.7 15.6V8.6h3.2l0.8 0.9h5v1.6" fill="#f4f4f4" stroke="#20207a" stroke-width="0.9"/><path d="M143.2 9.6L151.3 10.6L143.4 15.2Z" fill="#f2ee10" stroke="#c8c400" stroke-width="0.4"/><path d="M142.7 15.9H148.3" stroke="#707070" stroke-width="0.9"/><path d="M150.5 8.2C151.9 5.6 154.3 5.6 154.9 8" fill="none" stroke="#555" stroke-width="1.1"/><path d="M156.5 6.4L156.7 9.9L153.3 9.2Z" fill="#111"/><rect x="147.6" y="13.5" width="8.2" height="7" fill="#fff" stroke="#111" stroke-width="1.1"/><rect x="149" y="14.9" width="5.4" height="4.2" fill="#c6dcf6"/><rect x="149.5" y="15.6" width="2.8" height="1" fill="#3a72dc"/><rect x="152.5" y="15.5" width="1.2" height="1.2" fill="#1c50d0"/><rect x="149.5" y="17.3" width="2.8" height="1" fill="#3a72dc"/><rect x="152.5" y="17.2" width="1.2" height="1.2" fill="#1c50d0"/><path d="M152.3 14.9V19.1" stroke="#e6f0fc" stroke-width="0.7"/><defs><linearGradient id="fl167" x1="0" y1="0" x2="1" y2="0"><stop offset="0" stop-color="#9fe0f4"/><stop offset="0.3" stop-color="#e8f8fc"/><stop offset="0.45" stop-color="#fff"/></linearGradient></defs><rect x="168.2" y="6.6" width="14.1" height="14" rx="1.4" fill="url(#fl167)" stroke="#111" stroke-width="1.2"/><rect x="171.1" y="6.6" width="8.6" height="7.8" fill="#fff" stroke="#111" stroke-width="1"/><rect x="172.5" y="8" width="5.8" height="5" fill="#c4dcf6"/><g fill="#2c64d8"><rect x="172.9" y="8.6" width="2.8" height="0.9"/><rect x="172.9" y="11.4" width="2.8" height="0.9"/><rect x="176.7" y="8.6" width="1" height="1"/><rect x="176.7" y="11.4" width="1" height="1"/></g><rect x="171.9" y="16.4" width="8" height="4.2" fill="#050505"/><rect x="177.3" y="17.8" width="1.4" height="2.4" fill="#fff"/><path d="M199.4 7h8.6v5.4h-2.2l-1.6 -1.9h-4.8Z" fill="#fff" stroke="#111" stroke-width="1"/><rect x="199.9" y="11" width="1.9" height="2.2" fill="#f06a1e"/><rect x="193.6" y="13.4" width="8.6" height="7" fill="#fff" stroke="#111" stroke-width="1.1"/><rect x="195" y="14.8" width="5.8" height="4.2" fill="#c6dcf6"/><rect x="195.5" y="15.5" width="2.8" height="1" fill="#3a72dc"/><rect x="198.9" y="15.4" width="1.2" height="1.2" fill="#1c50d0"/><rect x="195.5" y="17.2" width="2.8" height="1" fill="#3a72dc"/><rect x="198.9" y="17.1" width="1.2" height="1.2" fill="#1c50d0"/><path d="M198.5 14.8V19" stroke="#e6f0fc" stroke-width="0.7"/><path d="M207 13.6L204.4 17" stroke="#111" stroke-width="1.1"/><path d="M203.2 18.6L203.6 14.6L206.8 17.4Z" fill="#111"/><path d="M225 7h8.6v5.4h-2.2l-1.6 -1.9h-4.8Z" fill="#fff" stroke="#111" stroke-width="1"/><rect x="225.8" y="11" width="1.9" height="2.2" fill="#f06a1e"/><rect x="219.6" y="13.4" width="8.6" height="7" fill="#fff" stroke="#111" stroke-width="1.1"/><rect x="221" y="14.8" width="5.8" height="4.2" fill="#c6dcf6"/><rect x="221.5" y="15.5" width="2.8" height="1" fill="#3a72dc"/><rect x="224.9" y="15.4" width="1.2" height="1.2" fill="#1c50d0"/><rect x="221.5" y="17.2" width="2.8" height="1" fill="#3a72dc"/><rect x="224.9" y="17.1" width="1.2" height="1.2" fill="#1c50d0"/><path d="M224.5 14.8V19" stroke="#e6f0fc" stroke-width="0.7"/><path d="M220.4 12.4L222.6 8.6" stroke="#111" stroke-width="1.1"/><path d="M224 6.6L224 10.4L220.8 8.2Z" fill="#111"/><path d="M258.3 6.9L258.6 14.4L265 12.6L262.6 10.6C265.4 8.6 268.6 9.6 270.6 13.2L272.2 12C269.8 7 264.6 5.6 260.8 8.8Z" fill="#2b8cc0" stroke="#1f6f9e" stroke-width="0.4"/><text x="258.3" y="19.4" font-family="Liberation Sans" font-weight="bold" font-size="5.2" fill="#176088" textLength="12.6" lengthAdjust="spacingAndGlyphs">DEF</text></svg><svg style="left:540px;top:55px" width="160" height="30" viewBox="540 55 160 30"><g stroke="#174e7c" stroke-width="1.25" fill="none" stroke-linecap="square"><path d="M554.3 67.7L550.4 63.8M550.3 67.2V63.7H553.8M558.9 67.7L562.8 63.8M562.9 67.2V63.7H559.4M554.3 72.1L550.4 76M550.3 72.6V76.1H553.8M558.9 72.1L562.8 76M562.9 72.6V76.1H559.4"/></g><path d="M575.2 72.2L577.6 68.6L578.8 70.6L580.4 67L581.6 70.4L583.4 66.4L584.6 69L586.4 68.4L588.8 66.6" fill="none" stroke="#1aa02e" stroke-width="1.2"/><g fill="#111"><path d="M587 62.4L589.4 65.4H584.6Z"/><path d="M587 73.4L589.4 70.4H584.6Z"/><path d="M575.6 74.9L578.6 72.6V77.2Z"/><path d="M587 74.9L584 72.6V77.2Z"/><rect x="578.4" y="74.3" width="1.8" height="1.2"/><rect x="582.4" y="74.3" width="1.8" height="1.2"/><rect x="586.4" y="65.2" width="1.2" height="1.4"/><rect x="586.4" y="69.2" width="1.2" height="1.4"/></g><path d="M633.8 70.4L639.4 75.6" stroke="#111" stroke-width="2.2" stroke-linecap="round"/><circle cx="630.9" cy="67.4" r="3.9" fill="#fafafa" stroke="#3c3c3c" stroke-width="1.3"/><path d="M655.6 76.2L653 71.6C652.2 70.2 652.4 69.4 653.2 69.2C654 69 654.8 69.6 655.6 70.8L655.2 66C655.2 64.6 656.8 64.4 657.2 65.8L657.6 68.6L657.8 64.4C657.9 63 659.7 63 659.9 64.4L660.2 68.4L661 64.8C661.4 63.6 663 64 662.9 65.2L662.6 69L664.2 66.6C665 65.6 666.4 66.4 665.8 67.8L664.4 72.4L663.4 76.2Z" fill="#fff" stroke="#111" stroke-width="0.9" stroke-linejoin="round"/><path d="M679.6 75.6L680.2 73.4L686.4 67L688 68.6L681.8 75Z" fill="#dfeaf2" stroke="#1c2c3c" stroke-width="0.8"/><path d="M685.2 66.6L688.6 70" stroke="#14283c" stroke-width="2"/><path d="M687.2 66.2L689.6 63.6C690.4 62.8 691.6 63 692 63.8C692.6 64.4 692.4 65.4 691.6 66L689.2 68.2Z" fill="#14283c"/></svg><span class="t" style="left:600.90px;top:66.00px;font-size:10px;line-height:10px;color:#1c4a74;font-weight:bold;">1</span><span class="t" style="left:606.30px;top:65.00px;font-size:10px;line-height:10px;color:#1c4a74;font-weight:bold;">:</span><span class="t" style="left:609.30px;top:66.00px;font-size:10px;line-height:10px;color:#1c4a74;font-weight:bold;">1</span><div style="left:0;top:597.2px;width:900px;height:1.4px;background:#fafafa"></div><div style="left:0;top:598.5px;width:900px;height:1.5px;background:linear-gradient(#6b7585,#414b5c)"></div><div style="left:0;top:2px;width:1.2px;height:21.6px;background:rgba(255,255,255,.7)"></div><div style="left:0;top:27px;width:1.2px;height:570.5px;background:#f9f9f9"></div></div></body></html>
